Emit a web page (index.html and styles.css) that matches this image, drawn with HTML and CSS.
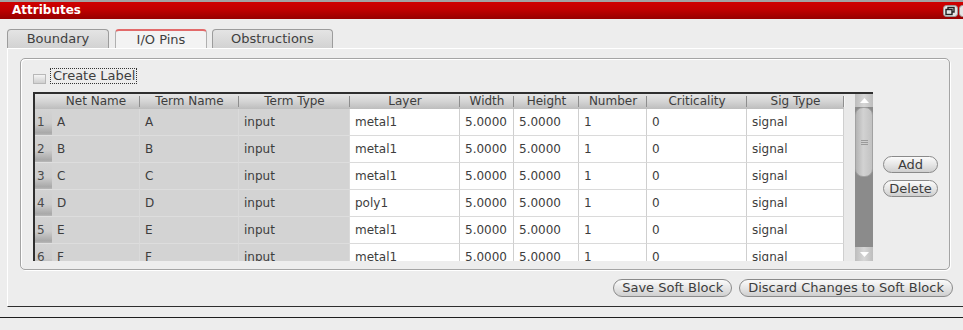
FILE: index.html
```html
<!DOCTYPE html>
<html>
<head>
<meta charset="utf-8">
<link rel="stylesheet" href="styles.css">
</head>
<body>
<div class="window">
  <div class="titlebar">
    <span class="title">Attributes</span>
    <div class="wicons">
      <svg class="wicon" width="15" height="12" viewBox="0 0 15 12"><rect x="0.5" y="0.5" width="14" height="11" rx="3" fill="#e4e4e4" stroke="#9a9a9a"/><rect x="5" y="2.5" width="6" height="4.5" fill="none" stroke="#222" stroke-width="1.4"/><rect x="3" y="4.5" width="6" height="5" fill="#e4e4e4" stroke="#222" stroke-width="1.4"/></svg>
      <svg class="wicon" width="15" height="12" viewBox="0 0 15 12"><rect x="0.5" y="0.5" width="14" height="11" rx="3" fill="#e4e4e4" stroke="#9a9a9a"/></svg>
    </div>
  </div>
  <div class="tabs">
    <div class="tab tab-boundary">Boundary</div>
    <div class="tab tab-pins selected">I/O Pins</div>
    <div class="tab tab-obs">Obstructions</div>
  </div>
  <div class="panel">
    <div class="group">
      <div class="cbrow">
        <span class="cb"></span>
        <span class="cblabel">Create Label</span>
      </div>
      <div class="tablerow">
        <div class="scrollpane">
          <div class="viewport">
            <div class="row head">
              <div class="hc"></div>
              <div class="hc">Net Name</div>
              <div class="hc">Term Name</div>
              <div class="hc">Term Type</div>
              <div class="hc">Layer</div>
              <div class="hc">Width</div>
              <div class="hc">Height</div>
              <div class="hc">Number</div>
              <div class="hc">Criticality</div>
              <div class="hc last">Sig Type</div>
            </div>
            <div class="row body">
              <div class="rn">1</div><div class="c g">A</div><div class="c g">A</div><div class="c g">input</div><div class="c">metal1</div><div class="c">5.0000</div><div class="c">5.0000</div><div class="c">1</div><div class="c">0</div><div class="c">signal</div>
            </div>
            <div class="row body">
              <div class="rn">2</div><div class="c g">B</div><div class="c g">B</div><div class="c g">input</div><div class="c">metal1</div><div class="c">5.0000</div><div class="c">5.0000</div><div class="c">1</div><div class="c">0</div><div class="c">signal</div>
            </div>
            <div class="row body">
              <div class="rn">3</div><div class="c g">C</div><div class="c g">C</div><div class="c g">input</div><div class="c">metal1</div><div class="c">5.0000</div><div class="c">5.0000</div><div class="c">1</div><div class="c">0</div><div class="c">signal</div>
            </div>
            <div class="row body">
              <div class="rn">4</div><div class="c g">D</div><div class="c g">D</div><div class="c g">input</div><div class="c">poly1</div><div class="c">5.0000</div><div class="c">5.0000</div><div class="c">1</div><div class="c">0</div><div class="c">signal</div>
            </div>
            <div class="row body">
              <div class="rn">5</div><div class="c g">E</div><div class="c g">E</div><div class="c g">input</div><div class="c">metal1</div><div class="c">5.0000</div><div class="c">5.0000</div><div class="c">1</div><div class="c">0</div><div class="c">signal</div>
            </div>
            <div class="row body">
              <div class="rn">6</div><div class="c g">F</div><div class="c g">F</div><div class="c g">input</div><div class="c">metal1</div><div class="c">5.0000</div><div class="c">5.0000</div><div class="c">1</div><div class="c">0</div><div class="c">signal</div>
            </div>
          </div>
          <div class="vscroll">
            <div class="sbtn up"><svg width="9" height="5" viewBox="0 0 9 5"><polygon points="0,5 4.5,0 9,5" fill="#fff"/></svg></div>
            <div class="track">
              <div class="thumb"><span class="grip"></span></div>
            </div>
            <div class="sbtn down"><svg width="9" height="5" viewBox="0 0 9 5"><polygon points="0,0 4.5,5 9,0" fill="#fff"/></svg></div>
          </div>
        </div>
        <div class="sidebtns">
          <button class="btn side">Add</button>
          <button class="btn side">Delete</button>
        </div>
      </div>
    </div>
    <div class="actions">
      <button class="btn">Save Soft Block</button>
      <button class="btn">Discard Changes to Soft Block</button>
    </div>
  </div>
  <div class="footer"></div>
</div>
</body>
</html>
```
FILE: styles.css
```css
html, body {
  margin: 0;
  padding: 0;
}
body {
  width: 963px;
  height: 330px;
  overflow: hidden;
  background: #ededed;
  font-family: "DejaVu Sans", "Liberation Sans", sans-serif;
  color: #3d3d3d;
}
.window {
  width: 963px;
}
.titlebar {
  display: flex;
  align-items: center;
  height: 17px;
  border-top: 2px solid #a3a3a3;
  background: linear-gradient(#d00000, #c00000 45%, #960000);
  padding-left: 12px;
}
.title {
  flex: 1;
  color: #fff;
  font-weight: bold;
  font-size: 12px;
  line-height: 17px;
}
.wicons {
  display: flex;
  gap: 1px;
  margin-right: -11px;
}
.wicon {
  display: block;
}
.tabs {
  display: flex;
  margin-top: 10px;
  padding-left: 7px;
  gap: 6px;
  height: 19px;
}
.tab {
  box-sizing: border-box;
  height: 19px;
  border: 1px solid #9c9c9c;
  border-bottom: none;
  border-radius: 4px 4px 0 0;
  background: linear-gradient(#e4e4e4, #d2d2d2);
  font-size: 13px;
  line-height: 18px;
  text-align: center;
  color: #404040;
}
.tab-boundary { width: 102px; }
.tab-pins { width: 92px; }
.tab-obs { width: 121px; margin-left: -1px; }
.tab.selected {
  background: #f3f3f3;
  border-color: #b0b0b0;
  border-top: 2px solid #e26a6a;
  line-height: 17px;
}
.panel {
  margin-left: 7px;
  border-top: 1px solid #fff;
  border-left: 1px solid #fff;
  border-bottom: 1px solid #2e2e2e;
  padding: 9px 10px 9px 12px;
}
.group {
  box-sizing: border-box;
  width: 930px;
  height: 212px;
  border: 1px solid #a4a4a4;
  border-radius: 5px;
  box-shadow: 1px 1px 0 #fff, inset 1px 1px 0 #fff;
  padding: 9px 0 0 12px;
}
.cbrow {
  display: flex;
  align-items: center;
  height: 16px;
}
.cb {
  box-sizing: border-box;
  width: 13px;
  height: 10px;
  margin-right: 4px;
  margin-top: 5px;
  border: 1px solid #b8b8b8;
  background: linear-gradient(#f4f4f4, #cfcfcf);
}
.cblabel {
  font-size: 13px;
  line-height: 14px;
  border: 1px dotted #333;
  padding: 0 1px 0 2px;
  color: #3d3d3d;
}
.tablerow {
  display: flex;
  align-items: center;
  margin-top: 8px;
}
.scrollpane {
  box-sizing: border-box;
  display: flex;
  width: 840px;
  height: 169px;
  border-top: 2px solid #2f2f2f;
  border-left: 2px solid #2f2f2f;
}
.viewport {
  width: 820px;
  height: 167px;
  overflow: hidden;
  background: #e9e9e9;
}
.row {
  display: grid;
  grid-template-columns: 17px 88px 99px 111px 110px 54px 65px 68px 100px 97px;
  width: 809px;
}
.row.head {
  height: 15px;
}
.hc {
  box-sizing: border-box;
  height: 15px;
  background: linear-gradient(#e6e6e6, #d4d4d4 50%, #bdbdbd);
  font-size: 12px;
  line-height: 14px;
  text-align: center;
  color: #3d3d3d;
  position: relative;
}
.hc::after {
  content: "";
  position: absolute;
  right: 0;
  top: 2px;
  bottom: 2px;
  width: 1px;
  background: #8e8e8e;
  box-shadow: 1px 0 0 #f4f4f4;
}
.hc:first-child::after {
  display: none;
}
.row.body {
  height: 27px;
}
.rn {
  box-sizing: border-box;
  height: 27px;
  background: linear-gradient(#d3d3d3, #cdcdcd 55%, #a8a8a8 92%, #b9b9b9);
  border-bottom: 1px solid #e0e0e0;
  font-size: 12px;
  line-height: 26px;
  padding-left: 2px;
  color: #4a4a4a;
}
.c {
  box-sizing: border-box;
  height: 27px;
  background: #fff;
  border-right: 1px solid #cfcfcf;
  border-bottom: 1px solid #dadada;
  font-size: 12px;
  line-height: 26px;
  padding-left: 5px;
  white-space: nowrap;
  overflow: hidden;
  color: #3d3d3d;
}
.c.g {
  background: #d3d3d3;
  border-right-color: #dadada;
  border-bottom-color: #dddddd;
}
.vscroll {
  width: 18px;
  height: 167px;
  display: flex;
  flex-direction: column;
}
.sbtn {
  display: flex;
  align-items: center;
  justify-content: center;
  background: linear-gradient(90deg, #bdbdbd, #d6d6d6 50%, #bdbdbd);
}
.sbtn.up {
  height: 13px;
}
.sbtn.down {
  height: 14px;
}
.track {
  flex: 1;
  background: #8b8b8b;
}
.thumb {
  box-sizing: border-box;
  height: 70px;
  border-radius: 8px;
  background: linear-gradient(90deg, #b4b4b4, #d2d2d2 45%, #c2c2c2);
  border: 1px solid #a2a2a2;
  display: flex;
  align-items: center;
  justify-content: center;
}
.grip {
  width: 7px;
  height: 5px;
  background: repeating-linear-gradient(#9a9a9a 0 1px, transparent 1px 2px);
}
.sidebtns {
  display: flex;
  flex-direction: column;
  gap: 7px;
  margin-left: 10px;
}
.btn {
  box-sizing: border-box;
  height: 18px;
  border: 1px solid #8a8a8a;
  border-radius: 9px;
  background: linear-gradient(#fbfbfb, #e6e6e6 50%, #cfcfcf);
  font-family: "DejaVu Sans", "Liberation Sans", sans-serif;
  font-size: 13px;
  line-height: 16px;
  color: #3d3d3d;
  padding: 0 8px;
  margin: 0;
}
.btn.side {
  width: 55px;
  height: 17px;
  padding: 0;
  line-height: 15px;
}
.actions {
  display: flex;
  justify-content: flex-end;
  gap: 7px;
  margin-top: 9px;
}
.footer {
  margin-top: 10px;
  border-top: 1px solid #1e1e1e;
}
```
